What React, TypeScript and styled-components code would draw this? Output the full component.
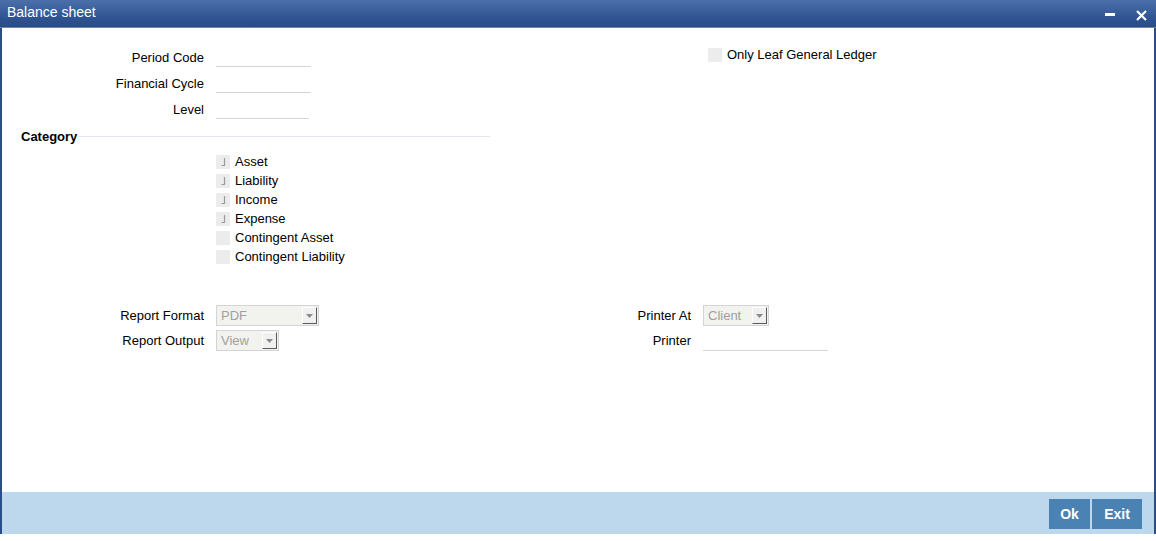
import React from 'react';
import styled, {createGlobalStyle} from 'styled-components';

const GlobalStyle = createGlobalStyle`
    html, body {
        margin: 0;
        padding: 0;
        background: #ffffff;
    }
    body {
        font-family: Arial, "Liberation Sans", sans-serif;
        font-size: 13px;
        color: #000000;
    }
`;

const Window = styled.div`
    width: 1156px;
    height: 541px;
    display: flex;
    flex-direction: column;
    box-sizing: border-box;
    background: #ffffff;
`;

const TitleBar = styled.div`
    height: 28px;
    flex: 0 0 28px;
    display: flex;
    align-items: center;
    justify-content: space-between;
    padding: 0 9px 0 7px;
    box-sizing: border-box;
    background: linear-gradient(#4a70aa, #2e5290 70%, #2a4c86);
    border-bottom: 1px solid #6f86a6;
    color: #ffffff;
`;

const Title = styled.span`
    font-size: 14px;
    margin-top: -3px;
`;

const WindowActions = styled.div`
    display: flex;
    align-items: center;
    gap: 21px;
    padding-top: 3px;
`;

const Body = styled.div`
    flex: 1;
    display: flex;
    flex-direction: column;
    border-left: 2px solid #2b4d86;
    border-right: 2px solid #2b4d86;
    min-height: 0;
`;

const Content = styled.div`
    flex: 1;
    padding-top: 16px;
`;

const TopSection = styled.div`
    display: flex;
`;

const LeftColumn = styled.div`
    width: 490px;
    display: flex;
    flex-direction: column;
`;

const FieldRow = styled.div<{$labelWidth: number; $height?: number}>`
    display: grid;
    grid-template-columns: ${({$labelWidth}) => $labelWidth}px auto;
    column-gap: 12px;
    align-items: center;
    height: ${({$height}) => $height ?? 26}px;
`;

const Label = styled.span`
    text-align: right;
    white-space: nowrap;
`;

const LineInput = styled.div<{$width: number}>`
    width: ${({$width}) => $width}px;
    height: 20px;
    box-sizing: border-box;
    border-bottom: 1px solid #d4d4d4;
`;

const RightColumn = styled.div`
    padding: 1px 0 0 216px;
    display: flex;
    align-items: flex-start;
`;

const CheckRow = styled.label`
    display: flex;
    align-items: center;
    gap: 5px;
    height: 19px;
`;

const Box = styled.span`
    width: 14px;
    height: 14px;
    background: #ececec;
    display: inline-flex;
    align-items: center;
    justify-content: center;
    flex: 0 0 14px;
`;

const SectionHeader = styled.div`
    display: flex;
    align-items: center;
    margin: 4px 0 0 19px;
    width: 469px;
    height: 20px;
`;

const SectionTitle = styled.span`
    font-weight: bold;
    padding-right: 2px;
`;

const SectionLine = styled.span`
    flex: 1;
    border-top: 1px solid #e4e8ee;
    margin-top: 1px;
`;

const CheckList = styled.div`
    display: flex;
    flex-direction: column;
    padding: 6px 0 0 214px;
`;

const ReportSection = styled.div`
    display: flex;
    margin-top: 37px;
`;

const ReportColumn = styled.div<{$width: number}>`
    width: ${({$width}) => $width}px;
    display: flex;
    flex-direction: column;
`;

const Select = styled.div<{$width: number}>`
    width: ${({$width}) => $width}px;
    height: 21px;
    box-sizing: border-box;
    border: 1px solid #d4d4d4;
    background: #f2f2ef;
    display: flex;
    align-items: center;
    justify-content: space-between;
    padding: 0 1px 0 4px;
    color: #a0a0a0;
`;

const SelectButton = styled.span`
    width: 15px;
    height: 17px;
    box-sizing: border-box;
    background: #f0f0f0;
    border-top: 1px solid #ffffff;
    border-left: 1px solid #ffffff;
    border-right: 1px solid #5a5a5a;
    border-bottom: 1px solid #5a5a5a;
    display: flex;
    align-items: center;
    justify-content: center;
`;

const Footer = styled.div`
    height: 42px;
    flex: 0 0 42px;
    background: #bdd8ec;
    display: flex;
    justify-content: flex-end;
    align-items: center;
    gap: 2px;
    padding-right: 12px;
`;

const FooterButton = styled.button<{$width: number}>`
    width: ${({$width}) => $width}px;
    height: 30px;
    border: none;
    background: #4a83b3;
    color: #ffffff;
    font-family: Arial, "Liberation Sans", sans-serif;
    font-size: 14px;
    font-weight: bold;
    padding: 0;
    margin-top: 2px;
`;

const BottomGap = styled.div`
    height: 7px;
    flex: 0 0 7px;
    background: #ffffff;
`;

const Tick = () => (
    <svg width="8" height="10" viewBox="0 0 8 10">
        <path d="M5.5 1 V8.5 H2.5" stroke="#9a9a9a" strokeWidth="1.2" fill="none" />
    </svg>
);

const Arrow = () => (
    <svg width="7" height="4" viewBox="0 0 7 4">
        <path d="M0 0 H7 L3.5 4 Z" fill="#8a8a8a" />
    </svg>
);

const Check = ({label, checked}: {label: string; checked?: boolean}) => (
    <CheckRow>
        <Box>{checked && <Tick />}</Box>
        <span>{label}</span>
    </CheckRow>
);

const Dropdown = ({value, width}: {value: string; width: number}) => (
    <Select $width={width}>
        <span>{value}</span>
        <SelectButton>
            <Arrow />
        </SelectButton>
    </Select>
);

export default function App() {
    return (
        <>
            <GlobalStyle />
            <Window>
                <TitleBar>
                    <Title>Balance sheet</Title>
                    <WindowActions>
                        <svg width="10" height="4" viewBox="0 0 10 4">
                            <rect x="0" y="0" width="10" height="3" fill="#ffffff" />
                        </svg>
                        <svg width="11" height="11" viewBox="0 0 11 11">
                            <path d="M1 1 L10 10 M10 1 L1 10" stroke="#ffffff" strokeWidth="2.2" />
                        </svg>
                    </WindowActions>
                </TitleBar>
                <Body>
                    <Content>
                        <TopSection>
                            <LeftColumn>
                                <FieldRow $labelWidth={202}>
                                    <Label>Period Code</Label>
                                    <LineInput $width={95} />
                                </FieldRow>
                                <FieldRow $labelWidth={202}>
                                    <Label>Financial Cycle</Label>
                                    <LineInput $width={95} />
                                </FieldRow>
                                <FieldRow $labelWidth={202}>
                                    <Label>Level</Label>
                                    <LineInput $width={93} />
                                </FieldRow>
                            </LeftColumn>
                            <RightColumn>
                                <Check label="Only Leaf General Ledger" />
                            </RightColumn>
                        </TopSection>
                        <SectionHeader>
                            <SectionTitle>Category</SectionTitle>
                            <SectionLine />
                        </SectionHeader>
                        <CheckList>
                            <Check label="Asset" checked />
                            <Check label="Liability" checked />
                            <Check label="Income" checked />
                            <Check label="Expense" checked />
                            <Check label="Contingent Asset" />
                            <Check label="Contingent Liability" />
                        </CheckList>
                        <ReportSection>
                            <ReportColumn $width={487}>
                                <FieldRow $labelWidth={202} $height={25}>
                                    <Label>Report Format</Label>
                                    <Dropdown value="PDF" width={103} />
                                </FieldRow>
                                <FieldRow $labelWidth={202} $height={25}>
                                    <Label>Report Output</Label>
                                    <Dropdown value="View" width={63} />
                                </FieldRow>
                            </ReportColumn>
                            <ReportColumn $width={400}>
                                <FieldRow $labelWidth={202} $height={25}>
                                    <Label>Printer At</Label>
                                    <Dropdown value="Client" width={66} />
                                </FieldRow>
                                <FieldRow $labelWidth={202} $height={25}>
                                    <Label>Printer</Label>
                                    <LineInput $width={125} />
                                </FieldRow>
                            </ReportColumn>
                        </ReportSection>
                    </Content>
                    <Footer>
                        <FooterButton $width={41}>Ok</FooterButton>
                        <FooterButton $width={50}>Exit</FooterButton>
                    </Footer>
                </Body>
                <BottomGap />
            </Window>
        </>
    );
}
